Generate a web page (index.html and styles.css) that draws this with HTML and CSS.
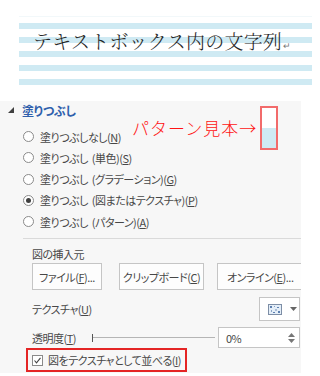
FILE: index.html
```html
<!DOCTYPE html>
<html lang="ja">
<head>
  <meta charset="UTF-8">
  <title>塗りつぶし</title>
  <link rel="stylesheet" href="styles.css">
</head>
<body>

  <div class="doc">
    <p class="doc-text">テキストボックス内の文字列<span class="ret">↵</span></p>
  </div>

  <div class="pane">
    <div class="pane-head">
      <svg class="caret" width="6" height="6" viewBox="0 0 6 6"><polygon points="6,0 6,6 0,6" fill="#404040"/></svg>
      <span>塗りつぶし</span>
    </div>

    <div class="note">パターン見本→</div>
    <div class="sample"></div>

    <ul class="radios">
      <li><span class="radio"></span>塗りつぶしなし(<u>N</u>)</li>
      <li><span class="radio"></span>塗りつぶし (単色)(<u>S</u>)</li>
      <li><span class="radio"></span>塗りつぶし (グラデーション)(<u>G</u>)</li>
      <li><span class="radio on"></span>塗りつぶし (図またはテクスチャ)(<u>P</u>)</li>
      <li><span class="radio"></span>塗りつぶし (パターン)(<u>A</u>)</li>
    </ul>

    <hr class="sep">

    <div class="sect">
      <div class="lbl">図の挿入元</div>
      <div class="btns">
        <button class="btn btn-file">ファイル(<u>F</u>)...</button>
        <button class="btn btn-clip">クリップボード(<u>C</u>)</button>
        <button class="btn btn-online">オンライン(<u>E</u>)...</button>
      </div>

      <div class="row row-tex">
        <span>テクスチャ(<u>U</u>)</span>
        <div class="tex-drop">
          <svg width="14" height="11" viewBox="0 0 14 11">
            <rect x="0.5" y="0.5" width="13" height="10" fill="#e4eef8" stroke="#7d8ea6"/>
            <rect x="2" y="2" width="2" height="2" fill="#5c7fb0"/>
            <rect x="6" y="2" width="1" height="1" fill="#8aa3c6"/>
            <rect x="9" y="3" width="2" height="1" fill="#5c7fb0"/>
            <rect x="3" y="6" width="1" height="2" fill="#8aa3c6"/>
            <rect x="7" y="5" width="2" height="2" fill="#a9bcd6"/>
            <rect x="10" y="7" width="2" height="2" fill="#5c7fb0"/>
            <rect x="5" y="8" width="2" height="1" fill="#5c7fb0"/>
          </svg>
          <svg class="drop-arrow" width="7" height="4" viewBox="0 0 7 4"><polygon points="0,0 7,0 3.5,4" fill="#666"/></svg>
        </div>
      </div>

      <div class="row row-alpha">
        <span class="alpha-lbl">透明度(<u>T</u>)</span>
        <div class="slider"></div>
        <div class="spin">
          0%
          <span class="spin-arrows">
            <svg width="7" height="4" viewBox="0 0 7 4"><polygon points="0,4 7,4 3.5,0" fill="#777"/></svg>
            <svg width="7" height="4" viewBox="0 0 7 4"><polygon points="0,0 7,0 3.5,4" fill="#777"/></svg>
          </span>
        </div>
      </div>
    </div>

    <div class="tile">
      <span class="check">
        <svg width="9" height="9" viewBox="0 0 9 9"><polyline points="1.5,4.5 3.5,6.8 7.5,1.8" fill="none" stroke="#444" stroke-width="1.1"/></svg>
      </span>
      図をテクスチャとして並べる(<u>I</u>)
    </div>
  </div>

</body>
</html>
```

FILE: styles.css
```css
* {
  box-sizing: border-box;
}

body {
  margin: 0;
  width: 320px;
  height: 376px;
  overflow: hidden;
  background: #fff;
  font-family: "Noto Sans CJK JP", "Noto Sans", sans-serif;
  font-size: 11px;
  letter-spacing: -0.5px;
  color: #474747;
  font-feature-settings: "palt";
}

/* document sample with stripes */
.doc {
  margin: 16px 0 0 19px;
  width: 293px;
  height: 70px;
  border-top: 1px solid #f2f8fa;
  background: repeating-linear-gradient(to bottom, #fff 0, #fff 6px, #cfeaf3 6px, #cfeaf3 12px, #fff 12px, #fff 14px);
}

.doc-text {
  margin: 0;
  padding: 12px 0 0 14px;
  font-family: "Noto Serif CJK JP", "Noto Sans CJK JP", serif;
  font-size: 19px;
  font-weight: 300;
  line-height: 24px;
  letter-spacing: 0.2px;
  color: #262626;
  font-feature-settings: normal;
}

.ret {
  font-size: 9px;
  color: #777;
  margin-left: 1px;
}

/* format pane */
.pane {
  position: relative;
  margin-top: 15px;
  width: 301px;
  height: 272px;
  background: #f7f7f7;
  overflow: hidden;
}

.pane-head {
  display: flex;
  align-items: center;
  height: 18px;
  padding-left: 8px;
  font-size: 12px;
  letter-spacing: -0.3px;
  color: #2f5fac;
  font-weight: bold;
}

.caret {
  margin-right: 8px;
}

.note {
  position: absolute;
  left: 132px;
  top: 17px;
  font-size: 17px;
  line-height: 20px;
  letter-spacing: 1px;
  font-weight: 300;
  color: #ff1414;
  font-feature-settings: normal;
}

.sample {
  position: absolute;
  left: 260px;
  top: 5px;
  width: 18px;
  height: 44px;
  border: 2px solid #f26b6b;
  background: linear-gradient(#fff 50%, #cfeaf3 50%);
}

.radios {
  list-style: none;
  margin: 7px 0 0;
  padding: 0 0 0 23px;
}

.radios li {
  display: flex;
  align-items: center;
  height: 21.25px;
  white-space: pre;
  word-spacing: 2px;
}

.radio {
  position: relative;
  flex: none;
  width: 11px;
  height: 11px;
  margin-right: 6px;
  border: 1px solid #8a8a8a;
  border-radius: 50%;
  background: #fff;
}

.radio.on::after {
  content: "";
  position: absolute;
  left: 2px;
  top: 2px;
  width: 5px;
  height: 5px;
  border-radius: 50%;
  background: #404040;
}

.sep {
  margin: 6px 0 0 23px;
  height: 0;
  border: 0;
  border-top: 1px solid #dadada;
}

.sect {
  padding: 0 1px 0 32px;
}

.lbl {
  margin-top: 6px;
  line-height: 18px;
}

.btns {
  display: flex;
  height: 27px;
  white-space: nowrap;
}

.btn {
  flex: none;
  height: 27px;
  padding: 0;
  border: 1px solid #c5c5c5;
  background: #fdfdfd;
  font: inherit;
  letter-spacing: inherit;
  color: #474747;
}

.btn-file {
  width: 70px;
  margin-right: 17px;
}

.btn-clip {
  width: 85px;
  margin-right: 13px;
}

.btn-online {
  width: 95px;
  text-align: left;
  padding-left: 9px;
}

.row {
  display: flex;
  align-items: center;
}

.row-tex {
  margin-top: 7px;
  height: 24px;
}

.tex-drop {
  display: flex;
  align-items: center;
  margin-left: auto;
  width: 41px;
  height: 24px;
  padding-left: 8px;
  border: 1px solid #c5c5c5;
  background: #fff;
}

.drop-arrow {
  margin-left: 8px;
}

.row-alpha {
  margin-top: 6px;
  height: 21px;
}

.alpha-lbl {
  flex: none;
  width: 60px;
}

.slider {
  flex: none;
  width: 123px;
  height: 8px;
  border-left: 1px solid #555;
  background: linear-gradient(#b5b5b5, #b5b5b5) center / 100% 1px no-repeat;
}

.spin {
  display: flex;
  align-items: center;
  margin-left: 3px;
  width: 82px;
  height: 21px;
  padding-left: 7px;
  border: 1px solid #c5c5c5;
  background: #fff;
}

.spin-arrows {
  display: flex;
  flex-direction: column;
  gap: 2px;
  margin-left: auto;
  margin-right: 4px;
}

.spin-arrows svg {
  display: block;
}

.tile {
  display: flex;
  align-items: center;
  margin-left: 26px;
  width: 161px;
  height: 24px;
  padding-left: 4px;
  border: 2px solid #e42525;
  white-space: nowrap;
}

.check {
  display: flex;
  align-items: center;
  justify-content: center;
  flex: none;
  width: 11px;
  height: 11px;
  margin-right: 5px;
  border: 1px solid #8a8a8a;
  background: #fff;
}
```
